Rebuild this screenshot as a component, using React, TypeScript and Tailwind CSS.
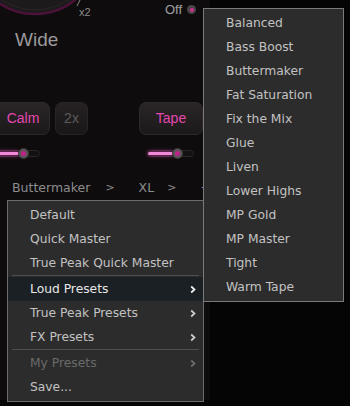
import React from 'react';

const MAIN_ITEMS: ({ label: string; sub?: boolean; active?: boolean; disabled?: boolean } | 'sep')[] = [
  { label: 'Default' },
  { label: 'Quick Master' },
  { label: 'True Peak Quick Master' },
  'sep',
  { label: 'Loud Presets', sub: true, active: true },
  { label: 'True Peak Presets', sub: true },
  { label: 'FX Presets', sub: true },
  'sep',
  { label: 'My Presets', sub: true, disabled: true },
  { label: 'Save...' },
];

const LOUD_PRESETS = [
  'Balanced',
  'Bass Boost',
  'Buttermaker',
  'Fat Saturation',
  'Fix the Mix',
  'Glue',
  'Liven',
  'Lower Highs',
  'MP Gold',
  'MP Master',
  'Tight',
  'Warm Tape',
];

const Chevron = ({ color }: { color: string }) => (
  <svg width="6" height="9" viewBox="0 0 6 9" className="shrink-0">
    <path d="M1.2 1.5 L4.5 4.5 L1.2 7.5" fill="none" stroke={color} strokeWidth="1.7" />
  </svg>
);

const Slider = ({ trackW, fillW, offset }: { trackW: number; fillW: number; offset: number }) => (
  <div
    className="relative h-[7px] rounded-full bg-[#141113] border border-[#2a2628]"
    style={{ width: trackW, marginLeft: offset }}
  >
    <div
      className="absolute left-0 top-[1px] h-[3px] rounded-full bg-[#f08ad8] shadow-[0_0_4px_#e040b0]"
      style={{ width: fillW }}
    />
    <div
      className="absolute top-[-3px] w-[11px] h-[11px] rounded-full bg-[#5a5658] border border-[#3a3638] flex items-center justify-center"
      style={{ left: fillW - 1 }}
    >
      <div className="w-[5px] h-[5px] rounded-full bg-[#c0208a]" />
    </div>
  </div>
);

export default function App() {
  return (
    <div className="relative w-[350px] h-[406px] overflow-hidden bg-[#060506] font-['Liberation_Sans',Arial,sans-serif]">
      {/* plugin panel behind the menus */}
      <div className="flex flex-col w-[210px] h-[400px] bg-[#0f0c0e]">
        <div className="flex items-start h-[20px]">
          <svg width="86" height="20" viewBox="0 0 86 20" className="shrink-0">
            <circle cx="35" cy="-50" r="64" fill="#1d1a1c" stroke="#4a1238" strokeWidth="2.5" />
            <circle cx="35" cy="-50" r="60" fill="none" stroke="#2a2628" strokeWidth="1" />
            <path d="M80 0 L77 6" stroke="#8a8a8a" strokeWidth="1" />
          </svg>
          <span className="mt-[6px] -ml-[7px] text-[11px] leading-[13px] text-[#8a8a8a]">x2</span>
          <span className="ml-auto mt-[2px] text-[13px] leading-[15px] text-[#a0a0a0]">Off</span>
          <div className="ml-[5px] mr-[14px] mt-[5px] w-[9px] h-[9px] rounded-full bg-[#4a4648] flex items-center justify-center">
            <div className="w-[4px] h-[4px] rounded-full bg-[#d0308f]" />
          </div>
        </div>

        <div className="mt-[9px] pl-[15px] text-[19px] leading-[22px] text-[#9a9a9a]">Wide</div>

        <div className="flex mt-[51px] h-[33px]">
          <div className="-ml-[10px] w-[60px] rounded-[7px] bg-gradient-to-b from-[#2a2628] to-[#1c191b] border border-[#2e2a2c] flex items-center justify-center pl-[6px] text-[14px] text-[#e447b0]">
            Calm
          </div>
          <div className="ml-[5px] w-[33px] rounded-[7px] bg-gradient-to-b from-[#262224] to-[#1a1719] border border-[#2a2628] flex items-center justify-center text-[14px] text-[#5c5a5b]">
            2x
          </div>
          <div className="ml-[51px] w-[64px] rounded-[7px] bg-gradient-to-b from-[#2a2628] to-[#1c191b] border border-[#2e2a2c] flex items-center justify-center text-[14px] text-[#e447b0]">
            Tape
          </div>
        </div>

        <div className="flex items-center mt-[14px] h-[8px]">
          <Slider trackW={48} fillW={26} offset={-8} />
          <Slider trackW={47} fillW={25} offset={107} />
        </div>

        <div className="flex items-center mt-[23px] h-[16px] font-['DejaVu_Sans',Verdana,sans-serif] text-[12.5px] text-[#8c8c8c]">
          <span className="ml-[12px]">Buttermaker</span>
          <span className="ml-[15px] text-[11px]">&gt;</span>
          <span className="ml-[24px]">XL</span>
          <span className="ml-[13px] text-[11px]">&gt;</span>
          <span className="ml-[24px]">{'{'}</span>
        </div>
        <div className="flex mt-[4px] h-[3px]">
          <div className="ml-[8px] w-[112px] bg-[#202020]" />
          <div className="ml-[13px] w-[45px] bg-[#202020]" />
        </div>
      </div>

      {/* main preset menu */}
      <div className="absolute left-[7px] top-[200px] w-[197px] border border-[#6c6c6c] bg-[#2c2c2c] py-[2px] font-['DejaVu_Sans',Verdana,sans-serif] text-[12.3px]">
        {MAIN_ITEMS.map((item, i) =>
          item === 'sep' ? (
            <div key={i} className="h-[2px] px-[4px]">
              <div className="h-[1px] bg-[#4e4e4e]" />
            </div>
          ) : (
            <div
              key={i}
              className={`flex items-center h-[24px] pl-[22px] pr-[7px] ${
                item.active ? 'bg-[#1b2024] text-[#e8e8e8]' : item.disabled ? 'text-[#6a6a6a]' : 'text-[#c2c2c2]'
              }`}
            >
              <span className="flex-1">{item.label}</span>
              {item.sub && <Chevron color={item.disabled ? '#6a6a6a' : item.active ? '#f0f0f0' : '#d0d0d0'} />}
            </div>
          ),
        )}
      </div>

      {/* Loud Presets submenu */}
      <div className="absolute left-[203px] top-[8px] w-[141px] border border-[#7a7a7a] bg-[#2c2c2c] pt-[2px] pb-[2px] font-['DejaVu_Sans',Verdana,sans-serif] text-[12.3px] text-[#c2c2c2]">
        {LOUD_PRESETS.map((name) => (
          <div key={name} className="flex items-center h-[24px] pl-[22px]">
            {name}
          </div>
        ))}
      </div>
    </div>
  );
}
